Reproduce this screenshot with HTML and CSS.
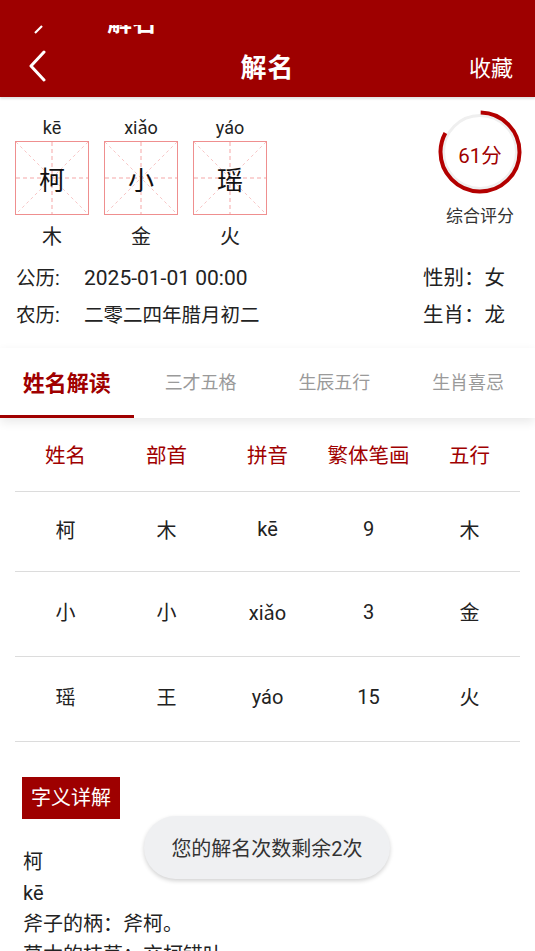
FILE: index.html
```html
<!DOCTYPE html>
<html lang="zh">
<head>
  <meta charset="UTF-8">
  <meta name="viewport" content="width=device-width, initial-scale=1.0">
  <title>解名</title>
  <link rel="stylesheet" href="styles.css">
</head>
<body>
  <div class="appbar">
    <div class="ghost">
      <div class="ghost-clip">
        <svg class="ghost-back" width="10" height="10" viewBox="0 0 10 10"><path d="M1 8 L8 1" stroke="#fff" stroke-width="2.2" fill="none"/></svg>
        <span class="ghost-title">解名</span>
      </div>
    </div>
    <div class="bar">
      <div class="bar-left">
        <svg width="20" height="32" viewBox="0 0 20 32"><path d="M16 2 L3 16 L16 30" stroke="#fff" stroke-width="3" fill="none" stroke-linecap="round" stroke-linejoin="round"/></svg>
      </div>
      <h1 class="bar-title">解名</h1>
      <div class="bar-right">收藏</div>
    </div>
  </div>

  <div class="summary">
    <div class="chars">
      <div class="char">
        <div class="pinyin">kē</div>
        <div class="grid-box">
          <svg class="grid-lines" viewBox="0 0 72 72"><path d="M0 0 L72 72 M72 0 L0 72" class="diag"/><path d="M36 0 V72 M0 36 H72" class="cross"/></svg>
          <span>柯</span>
        </div>
        <div class="element">木</div>
      </div>
      <div class="char">
        <div class="pinyin">xiǎo</div>
        <div class="grid-box">
          <svg class="grid-lines" viewBox="0 0 72 72"><path d="M0 0 L72 72 M72 0 L0 72" class="diag"/><path d="M36 0 V72 M0 36 H72" class="cross"/></svg>
          <span>小</span>
        </div>
        <div class="element">金</div>
      </div>
      <div class="char">
        <div class="pinyin">yáo</div>
        <div class="grid-box">
          <svg class="grid-lines" viewBox="0 0 72 72"><path d="M0 0 L72 72 M72 0 L0 72" class="diag"/><path d="M36 0 V72 M0 36 H72" class="cross"/></svg>
          <span>瑶</span>
        </div>
        <div class="element">火</div>
      </div>
    </div>
    <div class="score">
      <div class="ring">
        <svg width="86" height="86" viewBox="0 0 86 86">
          <circle cx="43" cy="43" r="36.5" stroke="#efefef" stroke-width="3" fill="none"/>
          <circle cx="43" cy="43" r="39.5" stroke="#b30000" stroke-width="4" fill="none" stroke-dasharray="205 300" transform="rotate(-89 43 43)"/>
        </svg>
        <span class="ring-text">61分</span>
      </div>
      <div class="score-label">综合评分</div>
    </div>
  </div>

  <div class="info">
    <div class="info-row">
      <span class="info-key">公历:</span>
      <span class="info-val date">2025-01-01 00:00</span>
      <span class="info-side">性别：女</span>
    </div>
    <div class="info-row">
      <span class="info-key">农历:</span>
      <span class="info-val">二零二四年腊月初二</span>
      <span class="info-side">生肖：龙</span>
    </div>
  </div>

  <div class="tabs">
    <div class="tab active">姓名解读</div>
    <div class="tab">三才五格</div>
    <div class="tab">生辰五行</div>
    <div class="tab">生肖喜忌</div>
  </div>

  <div class="table">
    <div class="row head">
      <span>姓名</span><span>部首</span><span>拼音</span><span>繁体笔画</span><span>五行</span>
    </div>
    <div class="row first">
      <span>柯</span><span>木</span><span>kē</span><span>9</span><span>木</span>
    </div>
    <div class="row">
      <span>小</span><span>小</span><span>xiǎo</span><span>3</span><span>金</span>
    </div>
    <div class="row">
      <span>瑶</span><span>王</span><span>yáo</span><span>15</span><span>火</span>
    </div>
  </div>

  <div class="detail">
    <div class="detail-tag">字义详解</div>
    <div class="detail-text">
      <p>柯</p>
      <p>kē</p>
      <p>斧子的柄：斧柯。</p>
      <p>草木的枝茎：交柯错叶。</p>
    </div>
  </div>

  <div class="toast">您的解名次数剩余2次</div>
</body>
</html>
```

FILE: styles.css
```css
body { margin: 0; width: 535px; height: 951px; overflow: hidden; background: #fff; font-family: Roboto, "Noto Sans CJK SC", sans-serif; color: #222; position: relative; }

.appbar { background: #9e0000; height: 97px; color: #fff; box-shadow: 0 2px 2px rgba(0,0,0,0.12); position: relative; z-index: 2; }
.ghost { height: 34px; padding-top: 25px; box-sizing: border-box; }
.ghost-clip { height: 9px; overflow: hidden; display: flex; align-items: flex-start; padding-left: 34px; }
.ghost-back { flex: none; }
.ghost-title { font-size: 25px; line-height: 25px; font-weight: 700; margin-top: -15px; margin-left: 63px; }
.bar { height: 63px; display: grid; grid-template-columns: 1fr auto 1fr; align-items: center; }
.bar-left { padding-left: 28px; display: flex; }
.bar-title { margin: 0; font-size: 26px; font-weight: 700; letter-spacing: 1px; }
.bar-right { text-align: right; padding-right: 22px; font-size: 22px; }

.summary { display: flex; justify-content: space-between; padding: 19px 14px 0 15px; }
.chars { display: flex; gap: 15px; }
.char { width: 74px; display: flex; flex-direction: column; align-items: center; }
.pinyin { font-size: 18px; line-height: 24px; }
.grid-box { position: relative; width: 72px; height: 72px; border: 1px solid #ef8f8f; display: flex; align-items: center; justify-content: center; margin-top: 1px; }
.grid-box span { position: relative; font-size: 26px; color: #111; }
.grid-lines { position: absolute; left: 0; top: 0; width: 72px; height: 72px; }
.grid-lines .cross { stroke: #f5a7a7; stroke-width: 1; stroke-dasharray: 4 3; fill: none; }
.grid-lines .diag { stroke: #f8c6c6; stroke-width: 1; stroke-dasharray: 3 3; fill: none; }
.element { font-size: 20px; margin-top: 9px; line-height: 26px; }

.score { display: flex; flex-direction: column; align-items: center; width: 86px; margin-top: -7px; margin-right: -2px; }
.ring { position: relative; width: 86px; height: 86px; display: flex; align-items: center; justify-content: center; }
.ring svg { position: absolute; left: 0; top: 0; }
.ring-text { position: relative; color: #a00000; font-size: 20.5px; margin-top: 3px; }
.score-label { font-size: 17px; color: #333; margin-top: 7px; white-space: nowrap; }

.info { padding: 10px 30px 0 16px; }
.info-row { display: flex; align-items: baseline; font-size: 19.5px; line-height: 36px; }
.info-key { width: 68px; }
.info-val { flex: 1; }
.info-val.date { font-size: 21px; }
.info-side { font-size: 20.5px; }

.tabs { display: grid; grid-template-columns: repeat(4, 1fr); margin-top: 14px; height: 70px; position: relative; z-index: 1; box-shadow: 0 4px 10px rgba(0,0,0,0.09); }
.tab { display: flex; align-items: center; justify-content: center; font-size: 18px; color: #9a9a9a; box-sizing: border-box; border-bottom: 3px solid transparent; padding-bottom: 2px; }
.tab.active { color: #a00000; font-weight: 700; font-size: 22px; border-bottom-color: #a00000; }

.table { margin: 0 15px; }
.row { display: grid; grid-template-columns: repeat(5, 1fr); align-items: center; height: 85px; box-sizing: border-box; border-bottom: 1.5px solid #dcdcdc; font-size: 20px; padding-bottom: 5px; }
.row span { text-align: center; }
.row.head { height: 74px; color: #a00000; font-size: 20.5px; padding-bottom: 1px; }
.row.first { height: 80px; }

.detail { padding: 35px 22px 0 22px; }
.detail-tag { display: inline-block; background: #9e0000; color: #fff; font-size: 20px; line-height: 42px; padding: 0 9px; }
.detail-text { margin-top: 28px; padding-left: 1px; font-size: 20px; line-height: 31px; }
.detail-text p { margin: 0; }

.toast { position: absolute; left: 144px; top: 816px; width: 246px; height: 63px; border-radius: 32px; background: #eff0f2; box-shadow: 0 2px 4px rgba(0,0,0,0.18); display: flex; align-items: center; justify-content: center; font-size: 20px; color: #333; z-index: 3; }
```
